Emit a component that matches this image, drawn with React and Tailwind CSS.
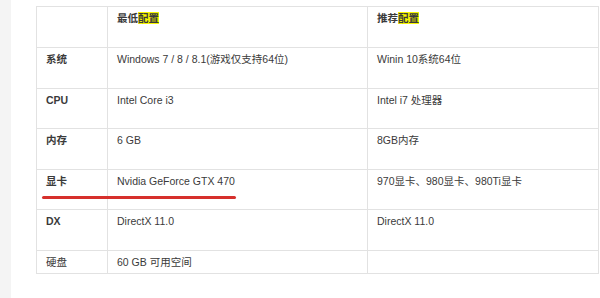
const rows = [
  { label: "系统", bold: true, min: "Windows 7 / 8 / 8.1(游戏仅支持64位)", rec: "Winin 10系统64位", h: "h-[41px]" },
  { label: "CPU", bold: true, min: "Intel Core i3", rec: "Intel i7 处理器", h: "h-[40px]" },
  { label: "内存", bold: true, min: "6 GB", rec: "8GB内存", h: "h-[41px]" },
  { label: "显卡", bold: true, min: "Nvidia GeForce GTX 470", rec: "970显卡、980显卡、980Ti显卡", h: "h-[40px]" },
  { label: "DX", bold: true, min: "DirectX 11.0", rec: "DirectX 11.0", h: "h-[41px]" },
  { label: "硬盘", bold: false, min: "60 GB 可用空间", rec: "", h: "h-[23px]" },
];

function HeadCell({ pre }) {
  return (
    <span className="font-bold">
      {pre}
      <span className="bg-[#f6f500]">配置</span>
    </span>
  );
}

export default function App() {
  const cell = "border border-[#e2e2e2] align-top px-[9px] pt-[2px] leading-[18px]";
  return (
    <div
      className="relative flex w-[600px] h-[298px] bg-white text-[10.5px] text-[#3a3a3a]"
      style={{ fontFamily: '"Liberation Sans", Arial, "Noto Sans CJK SC", sans-serif' }}
    >
      <div className="w-[11px] shrink-0 bg-[#f4f4f4]" />
      <div className="pl-[25px] pt-[6px]">
        <table className="border-collapse table-fixed w-[562px]">
          <colgroup>
            <col className="w-[71px]" />
            <col className="w-[260px]" />
            <col className="w-[231px]" />
          </colgroup>
          <tbody>
            <tr className="h-[41px]">
              <td className={cell} />
              <td className={cell}>
                <HeadCell pre="最低" />
              </td>
              <td className={cell}>
                <HeadCell pre="推荐" />
              </td>
            </tr>
            {rows.map((r) => (
              <tr key={r.label} className={r.h}>
                <td className={`${cell} ${r.bold ? "font-bold" : ""}`}>{r.label}</td>
                <td className={cell}>{r.min}</td>
                <td className={cell}>{r.rec}</td>
              </tr>
            ))}
          </tbody>
        </table>
      </div>
      {/* red annotation underline */}
      <div className="absolute left-[42px] top-[196px] w-[194px] h-[2.5px] rounded-full bg-[#d6302c]" />
    </div>
  );
}
